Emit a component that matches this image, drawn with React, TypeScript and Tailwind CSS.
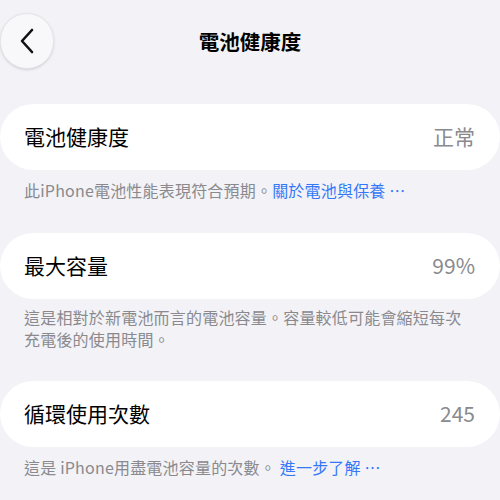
import React from "react";

const font = {
  fontFamily: '"Noto Sans CJK TC", "Noto Sans", sans-serif',
};

interface RowProps {
  label: string;
  value: string;
}

const Row = ({ label, value }: RowProps) => (
  <div className="flex h-[66px] items-center justify-between rounded-[33px] bg-white pl-6 pr-[25px]">
    <span className="text-[21px] text-black">{label}</span>
    <span className="text-[21px] text-[#8a8a8e]">{value}</span>
  </div>
);

const Footer = ({ children }: { children: React.ReactNode }) => (
  <p className="pl-6 pr-[30px] text-[16px] leading-[22px] tracking-[0.2px] text-[#8a8a8e]">
    {children}
  </p>
);

const App = () => {
  return (
    <div
      className="h-[500px] w-[500px] overflow-hidden bg-[#f2f2f7]"
      style={font}
    >
      {/* header */}
      <div className="grid grid-cols-[56px_1fr_56px] items-center pt-[13px]">
        <button className="flex h-[56px] w-[54px] items-center justify-center rounded-full border border-[#e4e4ea] bg-[#f8f8fa] shadow-sm">
          <svg width="18" height="28" viewBox="0 0 18 28" fill="none">
            <path
              d="M14 3 L4 14 L14 25"
              stroke="#111"
              strokeWidth="2.6"
              strokeLinecap="round"
              strokeLinejoin="round"
            />
          </svg>
        </button>
        <h1 className="text-center text-[20.5px] font-semibold text-black">
          電池健康度
        </h1>
        <div />
      </div>

      <div className="mt-[35px]">
        <Row label="電池健康度" value="正常" />
        <div className="mt-[9px]">
          <Footer>
            此iPhone電池性能表現符合預期。
            <span className="text-[#3478f6]">關於電池與保養 ⋯</span>
          </Footer>
        </div>
      </div>

      <div className="mt-[32px]">
        <Row label="最大容量" value="99%" />
        <div className="mt-[7px]">
          <Footer>
            這是相對於新電池而言的電池容量。容量較低可能會縮短每次充電後的使用時間。
          </Footer>
        </div>
      </div>

      <div className="mt-[31px]">
        <Row label="循環使用次數" value="245" />
        <div className="mt-[9px]">
          <Footer>
            這是 iPhone用盡電池容量的次數。{"  "}
            <span className="text-[#3478f6]">進一步了解 ⋯</span>
          </Footer>
        </div>
      </div>
    </div>
  );
};

export default App;
